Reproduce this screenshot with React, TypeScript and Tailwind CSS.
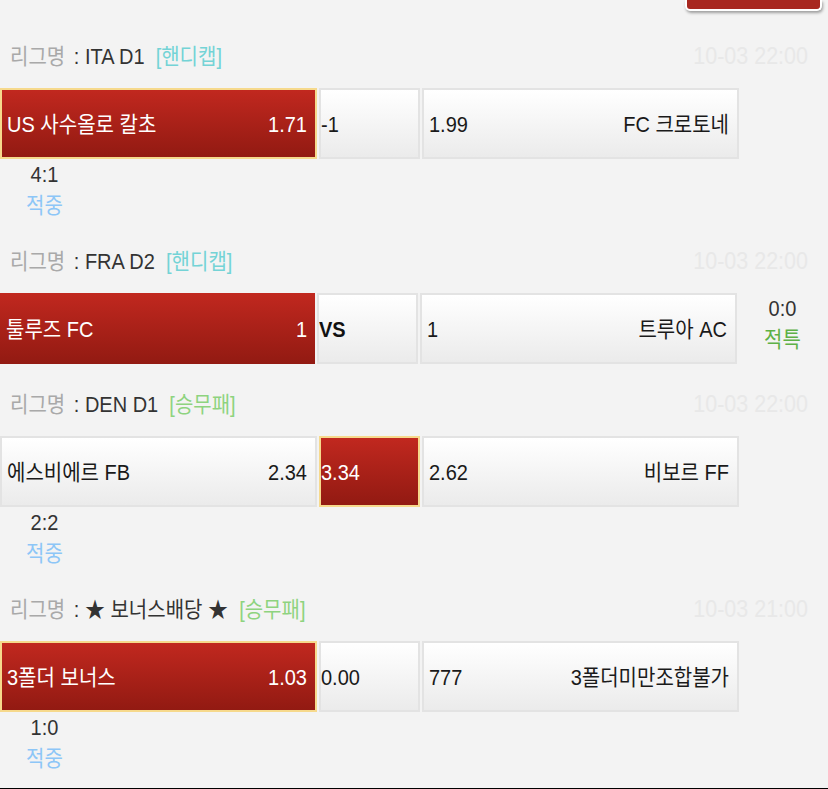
import React from 'react';

type Pick = 'home' | 'mid' | 'away';

interface Game {
  league: string;
  kind: string;
  kindColor: string;
  date: string;
  home: string;
  homeOdd: string;
  mid: string;
  awayOdd: string;
  away: string;
  pick: Pick;
  flat?: boolean;
  score?: string;
  result?: string;
  side?: { score: string; result: string };
}

const games: Game[] = [
  {
    league: 'ITA D1',
    kind: '[핸디캡]',
    kindColor: 'text-[#74d3d6]',
    date: '10-03 22:00',
    home: 'US 사수올로 칼초',
    homeOdd: '1.71',
    mid: '-1',
    awayOdd: '1.99',
    away: 'FC 크로토네',
    pick: 'home',
    score: '4:1',
    result: '적중',
  },
  {
    league: 'FRA D2',
    kind: '[핸디캡]',
    kindColor: 'text-[#74d3d6]',
    date: '10-03 22:00',
    home: '툴루즈 FC',
    homeOdd: '1',
    mid: 'VS',
    awayOdd: '1',
    away: '트루아 AC',
    pick: 'home',
    flat: true,
    side: { score: '0:0', result: '적특' },
  },
  {
    league: 'DEN D1',
    kind: '[승무패]',
    kindColor: 'text-[#8ed37f]',
    date: '10-03 22:00',
    home: '에스비에르 FB',
    homeOdd: '2.34',
    mid: '3.34',
    awayOdd: '2.62',
    away: '비보르 FF',
    pick: 'mid',
    score: '2:2',
    result: '적중',
  },
  {
    league: '★ 보너스배당 ★',
    kind: '[승무패]',
    kindColor: 'text-[#8ed37f]',
    date: '10-03 21:00',
    home: '3폴더 보너스',
    homeOdd: '1.03',
    mid: '0.00',
    awayOdd: '777',
    away: '3폴더미만조합불가',
    pick: 'home',
    score: '1:0',
    result: '적중',
  },
];

const red = 'bg-linear-to-b from-[#c1281f] to-[#921a12] text-white';
const white = 'bg-linear-to-b from-white to-[#ebebeb] border-[#e3e3e3] text-[#1a1a1a]';
// the source renders its glyphs a little taller than Arial
const tall = 'inline-block scale-y-110';

function GameBlock({ g, first }: { g: Game; first: boolean }) {
  const homeSel = g.pick === 'home';
  const midSel = g.pick === 'mid';

  return (
    <div className={first ? '' : 'mt-[23px]'}>
      <div className="h-[30px] flex items-center justify-between pl-[10px] pr-[20px] pt-[4px]">
        <div className={`whitespace-pre ${tall}`}>
          <span className="text-[#a9a9a9]">리그명</span>
          <span className="text-[#333] ml-[3px]"> : </span>
          <span className="text-[#333]">{g.league}  </span>
          <span className={g.kindColor}>{g.kind}</span>
        </div>
        <span className={`text-[21.5px] text-[#e8e8e8] ${tall}`}>{g.date}</span>
      </div>

      <div className="mt-[19px] flex items-start">
        <div className="flex gap-[2px] h-[71px]">
          <div
            className={
              homeSel
                ? g.flat
                  ? `w-[315px] pl-[6px] pr-[8px] flex items-center justify-between ${red}`
                  : `w-[317px] border-2 border-[#f6d98c] pl-[5px] pr-[8px] flex items-center justify-between ${red}`
                : `w-[317px] border-2 pl-[5px] pr-[8px] flex items-center justify-between ${white}`
            }
          >
            <span className={tall}>{g.home}</span>
            <span className={tall}>{g.homeOdd}</span>
          </div>
          <div
            className={
              midSel
                ? `w-[101px] border-2 border-[#f6d98c] flex items-center ${red}`
                : `w-[101px] border-2 flex items-center ${white}`
            }
          >
            <span className={`${tall} ${g.mid === 'VS' ? 'font-bold text-[#111]' : ''}`}>{g.mid}</span>
          </div>
          <div className={`w-[317px] border-2 pl-[5px] pr-[8px] flex items-center justify-between ${white}`}>
            <span className={tall}>{g.awayOdd}</span>
            <span className={tall}>{g.away}</span>
          </div>
        </div>
        {g.side && (
          <div className="flex-1 text-center">
            <div className="h-[31px] leading-[31px] text-[#333]"><span className={tall}>{g.side.score}</span></div>
            <div className="h-[31px] leading-[31px] text-[#5db146]"><span className={tall}>{g.side.result}</span></div>
          </div>
        )}
      </div>

      {g.score && (
        <div className="w-[89px] text-center">
          <div className="h-[31px] leading-[31px] text-[#333]"><span className={tall}>{g.score}</span></div>
          <div className="h-[31px] leading-[31px] text-[#8dc6f7]"><span className={tall}>{g.result}</span></div>
        </div>
      )}
    </div>
  );
}

export default function App() {
  return (
    <div className="w-[828px] h-[789px] overflow-hidden bg-[#f3f3f3] text-[20px] font-['Liberation_Sans','Noto_Sans_CJK_KR',sans-serif]">
      <div className="h-[39px] flex justify-end pr-[6px]">
        <div className="w-[137px] h-[11px] bg-[#a8271f] border-2 border-t-0 border-white rounded-b-[5px] shadow-[1px_2px_3px_rgba(0,0,0,0.35)]" />
      </div>

      {games.map((g, i) => (
        <GameBlock key={i} g={g} first={i === 0} />
      ))}

      <div className="mt-[14px] h-px bg-black" />
    </div>
  );
}
